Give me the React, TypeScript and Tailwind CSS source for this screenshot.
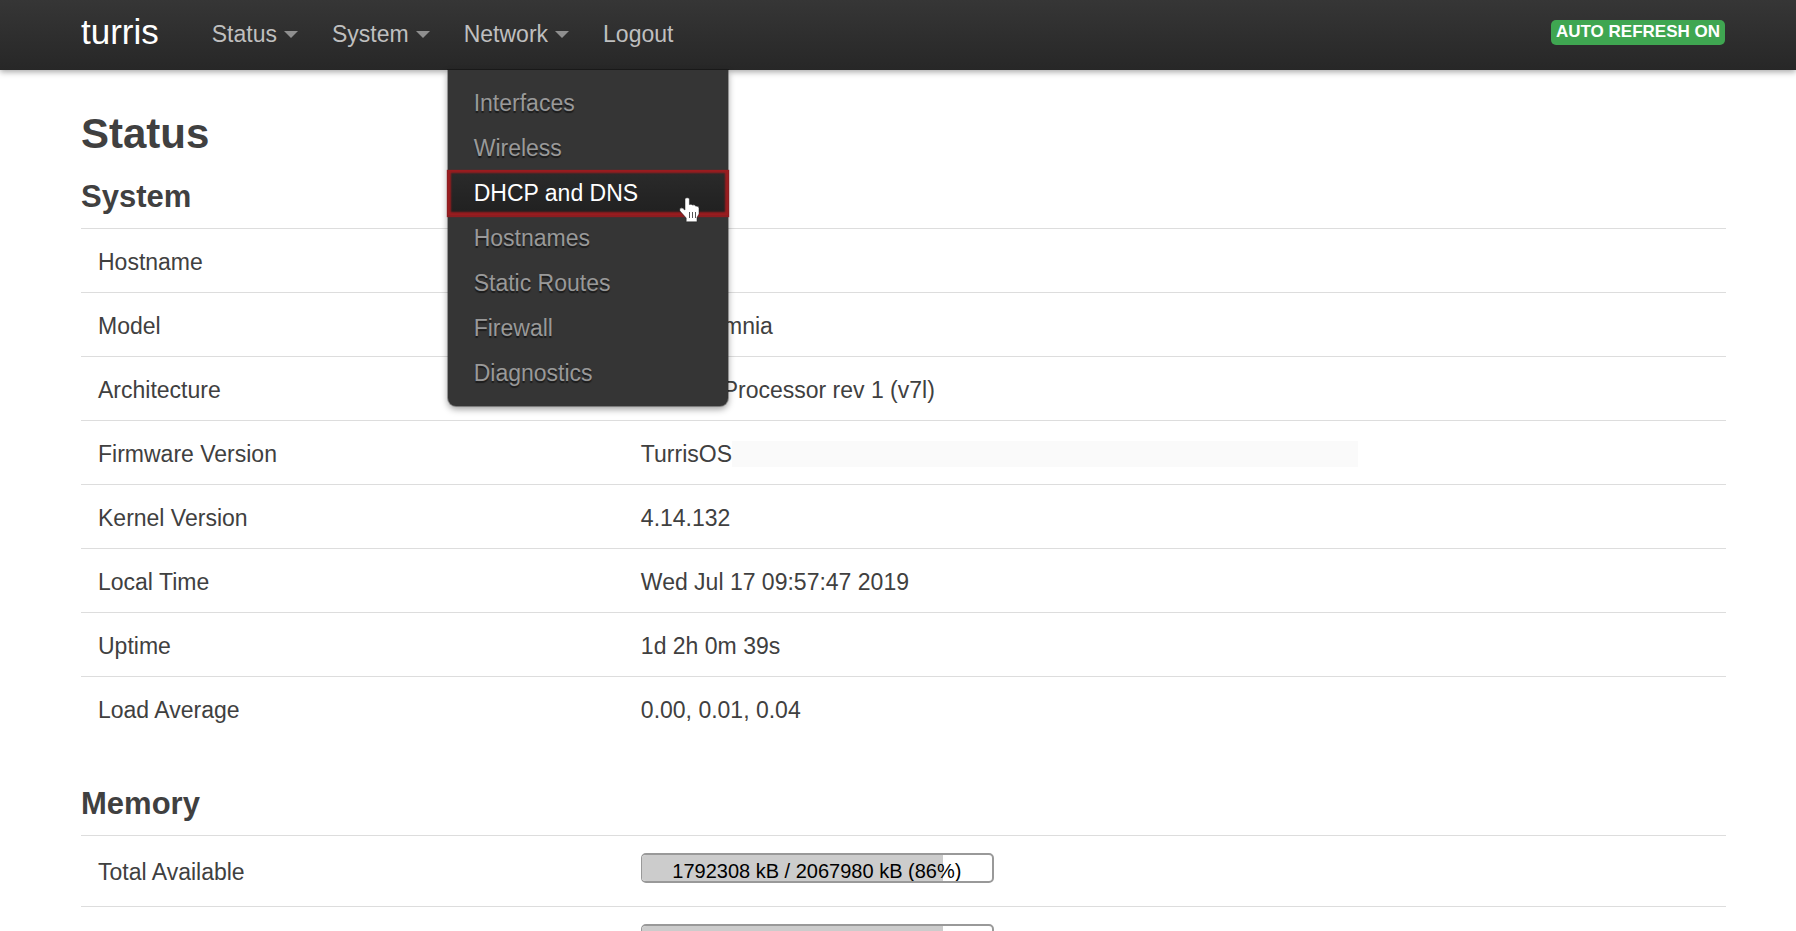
import React from "react";

type NavEntry = { label: string; items?: boolean };

const NAV: NavEntry[] = [
  { label: "Status", items: true },
  { label: "System", items: true },
  { label: "Network", items: true },
  { label: "Logout" },
];

const NETWORK_MENU = [
  "Interfaces",
  "Wireless",
  "DHCP and DNS",
  "Hostnames",
  "Static Routes",
  "Firewall",
  "Diagnostics",
];

const SYSTEM_ROWS: { label: string; value: string; redacted?: boolean }[] = [
  { label: "Hostname", value: "" },
  { label: "Model", value: "Turris Omnia" },
  { label: "Architecture", value: "ARMv7 Processor rev 1 (v7l)" },
  { label: "Firmware Version", value: "TurrisOS", redacted: true },
  { label: "Kernel Version", value: "4.14.132" },
  { label: "Local Time", value: "Wed Jul 17 09:57:47 2019" },
  { label: "Uptime", value: "1d 2h 0m 39s" },
  { label: "Load Average", value: "0.00, 0.01, 0.04" },
];

function Caret() {
  return (
    <svg width="14" height="7" viewBox="0 0 14 7" className="fill-[#8f8f8f]" aria-hidden="true">
      <path d="M0 0h14L7 7z" />
    </svg>
  );
}

function HandCursor() {
  return (
    <svg
      width="21"
      height="26"
      viewBox="0 0 21 26"
      className="pointer-events-none absolute right-7 top-[27px] z-10"
      aria-hidden="true"
    >
      <path
        d="M6 2Q6 .8 8.2 .8T10.4 2V7.6Q12.4 6.8 13.4 8 15.6 7.4 16.6 9 20 8.8 20 11.4V17L18 20.5V24.8H7.2V21L.8 13.8V11.4Q3 9.8 6 13Z"
        fill="#fff"
        stroke="#1a1a1a"
        strokeWidth="0.5"
        strokeLinejoin="round"
      />
      <path d="M10.5 15v6M13.5 15v6M16.5 15v6" stroke="#555" strokeWidth="1" />
    </svg>
  );
}

function NetworkMenu() {
  return (
    <ul className="absolute left-px top-full z-20 w-[280px] rounded-b-lg bg-[#353535] pt-[10px] pb-[11px] shadow-[0_0_0_1px_rgba(0,0,0,0.3),0_3px_7px_rgba(0,0,0,0.4)]">
      {NETWORK_MENU.map((label) => {
        const active = label === "DHCP and DNS";
        return (
          <li key={label} className="relative">
            <a
              href="#"
              className={
                active
                  ? "block bg-linear-to-b from-[#2b2b2b] to-[#202020] pt-[2px] pl-[26px] leading-[43px] text-white shadow-[inset_0_0_2px_3px_#9a1c1f,0_1px_1px_1px_#8d1d20]"
                  : "block pt-[2px] pl-[26px] leading-[43px] text-[#999] [text-shadow:0_2px_1px_rgba(0,0,0,0.5)]"
              }
            >
              {label}
            </a>
            {active && <HandCursor />}
          </li>
        );
      })}
    </ul>
  );
}

function Header() {
  return (
    <header className="relative z-10 h-[70px] bg-linear-to-b from-[#363636] to-[#272727] shadow-[0_2px_6px_rgba(0,0,0,0.35)]">
      <div className="flex h-full items-start justify-between pr-[71px] pl-[81px]">
        <div className="flex h-full">
          <a href="#" className="pr-9 text-[35px] leading-[64px] text-white">
            turris
          </a>
          <nav>
            <ul className="flex h-full text-[23px] leading-[69px]">
              {NAV.map((entry) => (
                <li key={entry.label} className="relative h-full">
                  <a href="#" className="flex items-center gap-[7px] px-[17px] text-[#bfbfbf]">
                    {entry.label}
                    {entry.items && <Caret />}
                  </a>
                  {entry.label === "Network" && <NetworkMenu />}
                </li>
              ))}
            </ul>
          </nav>
        </div>
        <button
          type="button"
          className="mt-5 h-[25px] rounded-[5px] bg-[#3fa651] px-[5px] pb-[2px] text-[17px] leading-[23px] font-bold text-white uppercase"
        >
          Auto Refresh on
        </button>
      </div>
    </header>
  );
}

function Meter({ percent, text, label }: { percent: number; text?: string; label: string }) {
  return (
    <div
      role="progressbar"
      aria-label={label}
      aria-valuenow={percent}
      aria-valuemin={0}
      aria-valuemax={100}
      className="relative h-[30px] w-[353px] overflow-hidden rounded-[5px] border-2 border-l border-[#999] bg-white"
    >
      <div className="h-full bg-[#ccc]" style={{ width: `${percent}%` }} />
      {text && (
        <span className="absolute inset-0 pt-[3px] text-center text-[20px] leading-[26px] text-black">{text}</span>
      )}
    </div>
  );
}

export default function App() {
  return (
    <div className="bg-white font-['Liberation_Sans',Arial,sans-serif] text-[23px] text-[#404040]">
      <Header />
      <main className="pt-8 pr-[70px] pl-[81px]">
        <h1 className="text-[42px] leading-[64px] font-bold">Status</h1>

        <section>
          <h2 className="text-[31px] leading-[62px] font-bold">System</h2>
          <table className="w-full table-fixed border-collapse">
            <tbody>
              {SYSTEM_ROWS.map((row) => (
                <tr key={row.label} className="h-16 border-t border-[#ddd]">
                  <th scope="row" className="w-[33%] px-[17px] pt-[3px] text-left font-normal">
                    {row.label}
                  </th>
                  <td className="px-[17px] pt-[3px]">
                    <div className="flex items-center">
                      {row.value}
                      {row.redacted && <span className="h-[26px] w-[626px] bg-[#fafafa]" />}
                    </div>
                  </td>
                </tr>
              ))}
            </tbody>
          </table>
        </section>

        <section className="pt-8">
          <h2 className="text-[31px] leading-[62px] font-bold">Memory</h2>
          <table className="w-full table-fixed border-collapse">
            <tbody>
              <tr className="h-[71px] border-t border-[#ddd]">
                <th scope="row" className="w-[33%] px-[17px] pt-[3px] text-left font-normal">
                  Total Available
                </th>
                <td className="px-[17px] pt-[17px] align-top">
                  <Meter percent={86} label="Total Available" text="1792308 kB / 2067980 kB (86%)" />
                </td>
              </tr>
              <tr className="h-[71px] border-t border-[#ddd]">
                <td className="px-[17px]" />
                <td className="px-[17px] pt-[17px] align-top">
                  <Meter percent={86} label="Memory" />
                </td>
              </tr>
            </tbody>
          </table>
        </section>
      </main>
    </div>
  );
}
